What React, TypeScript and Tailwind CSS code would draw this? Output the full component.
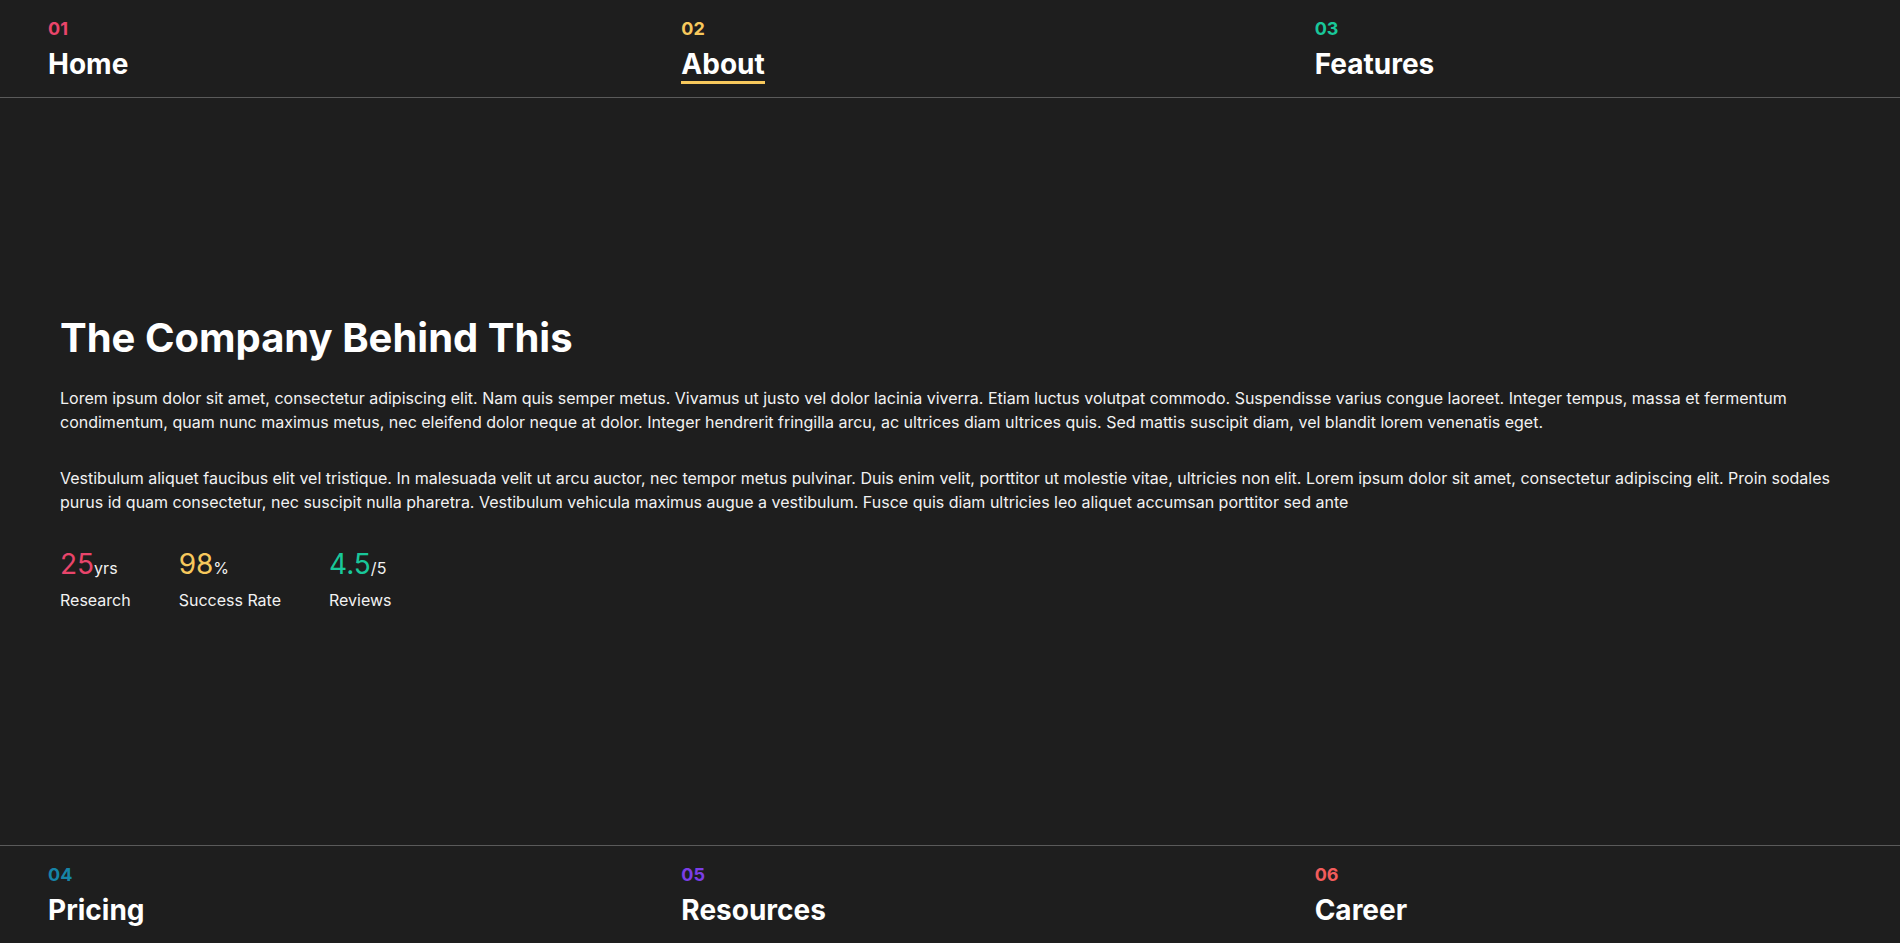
import React from "react";

type NavItem = {
  num: string;
  label: string;
  numClass: string;
  active?: boolean;
};

const topItems: NavItem[] = [
  { num: "01", label: "Home", numClass: "text-[#e9456b]" },
  { num: "02", label: "About", numClass: "text-[#f7c85c]", active: true },
  { num: "03", label: "Features", numClass: "text-[#19c79a]" },
];

const bottomItems: NavItem[] = [
  { num: "04", label: "Pricing", numClass: "text-[#1684a7]" },
  { num: "05", label: "Resources", numClass: "text-[#7b3ee6]" },
  { num: "06", label: "Career", numClass: "text-[#f25c5c]" },
];

const NavRow = ({ items, className = "" }: { items: NavItem[]; className?: string }) => (
  <nav className={"grid grid-cols-3 h-[98px] shrink-0 " + className}>
    {items.map((item) => (
      <div key={item.num} className="px-12 pt-[17px]">
        <p className={"text-[18px] font-bold leading-6 " + item.numClass}>{item.num}</p>
        <p className="mt-1.5 text-[28px] font-bold leading-[34px] text-white">
          {item.active ? (
            <span className="border-b-[3px] border-[#f7c85c]">{item.label}</span>
          ) : (
            item.label
          )}
        </p>
      </div>
    ))}
  </nav>
);

const stats = [
  { value: "25", unit: "yrs", label: "Research", color: "text-[#e9456b]" },
  { value: "98", unit: "%", label: "Success Rate", color: "text-[#f7c85c]" },
  { value: "4.5", unit: "/5", label: "Reviews", color: "text-[#19c79a]" },
];

const App = () => {
  return (
    <div
      className="h-screen bg-[#1e1e1e] text-white flex flex-col overflow-hidden"
      style={{ fontFamily: "Inter, 'Noto Sans', sans-serif" }}
    >
      <NavRow items={topItems} className="border-b border-[#5a5a5a]" />

      <main className="flex-1 flex flex-col justify-center px-[60px] pb-[17px]">
        <h1 className="text-[40px] font-bold leading-[48px] mb-6">The Company Behind This</h1>
        <p className="text-base leading-6 text-[#f2f2f2] mb-8">
          Lorem ipsum dolor sit amet, consectetur adipiscing elit. Nam quis semper metus. Vivamus ut justo vel dolor
          lacinia viverra. Etiam luctus volutpat commodo. Suspendisse varius congue laoreet. Integer tempus, massa et
          fermentum condimentum, quam nunc maximus metus, nec eleifend dolor neque at dolor. Integer hendrerit fringilla
          arcu, ac ultrices diam ultrices quis. Sed mattis suscipit diam, vel blandit lorem venenatis eget.
        </p>
        <p className="text-base leading-6 text-[#f2f2f2]">
          Vestibulum aliquet faucibus elit vel tristique. In malesuada velit ut arcu auctor, nec tempor metus pulvinar.
          Duis enim velit, porttitor ut molestie vitae, ultricies non elit. Lorem ipsum dolor sit amet, consectetur
          adipiscing elit. Proin sodales purus id quam consectetur, nec suscipit nulla pharetra. Vestibulum vehicula
          maximus augue a vestibulum. Fusce quis diam ultricies leo aliquet accumsan porttitor sed ante
        </p>
        <div className="flex gap-12 mt-8">
          {stats.map((s) => (
            <div key={s.label}>
              <p className="leading-9">
                <span className={"text-[28px] " + s.color}>{s.value}</span>
                <span className="text-base text-[#f2f2f2]">{s.unit}</span>
              </p>
              <p className="mt-0.5 text-base leading-6 text-[#f2f2f2]">{s.label}</p>
            </div>
          ))}
        </div>
      </main>

      <NavRow items={bottomItems} className="border-t border-[#5a5a5a]" />
    </div>
  );
};

export default App;
